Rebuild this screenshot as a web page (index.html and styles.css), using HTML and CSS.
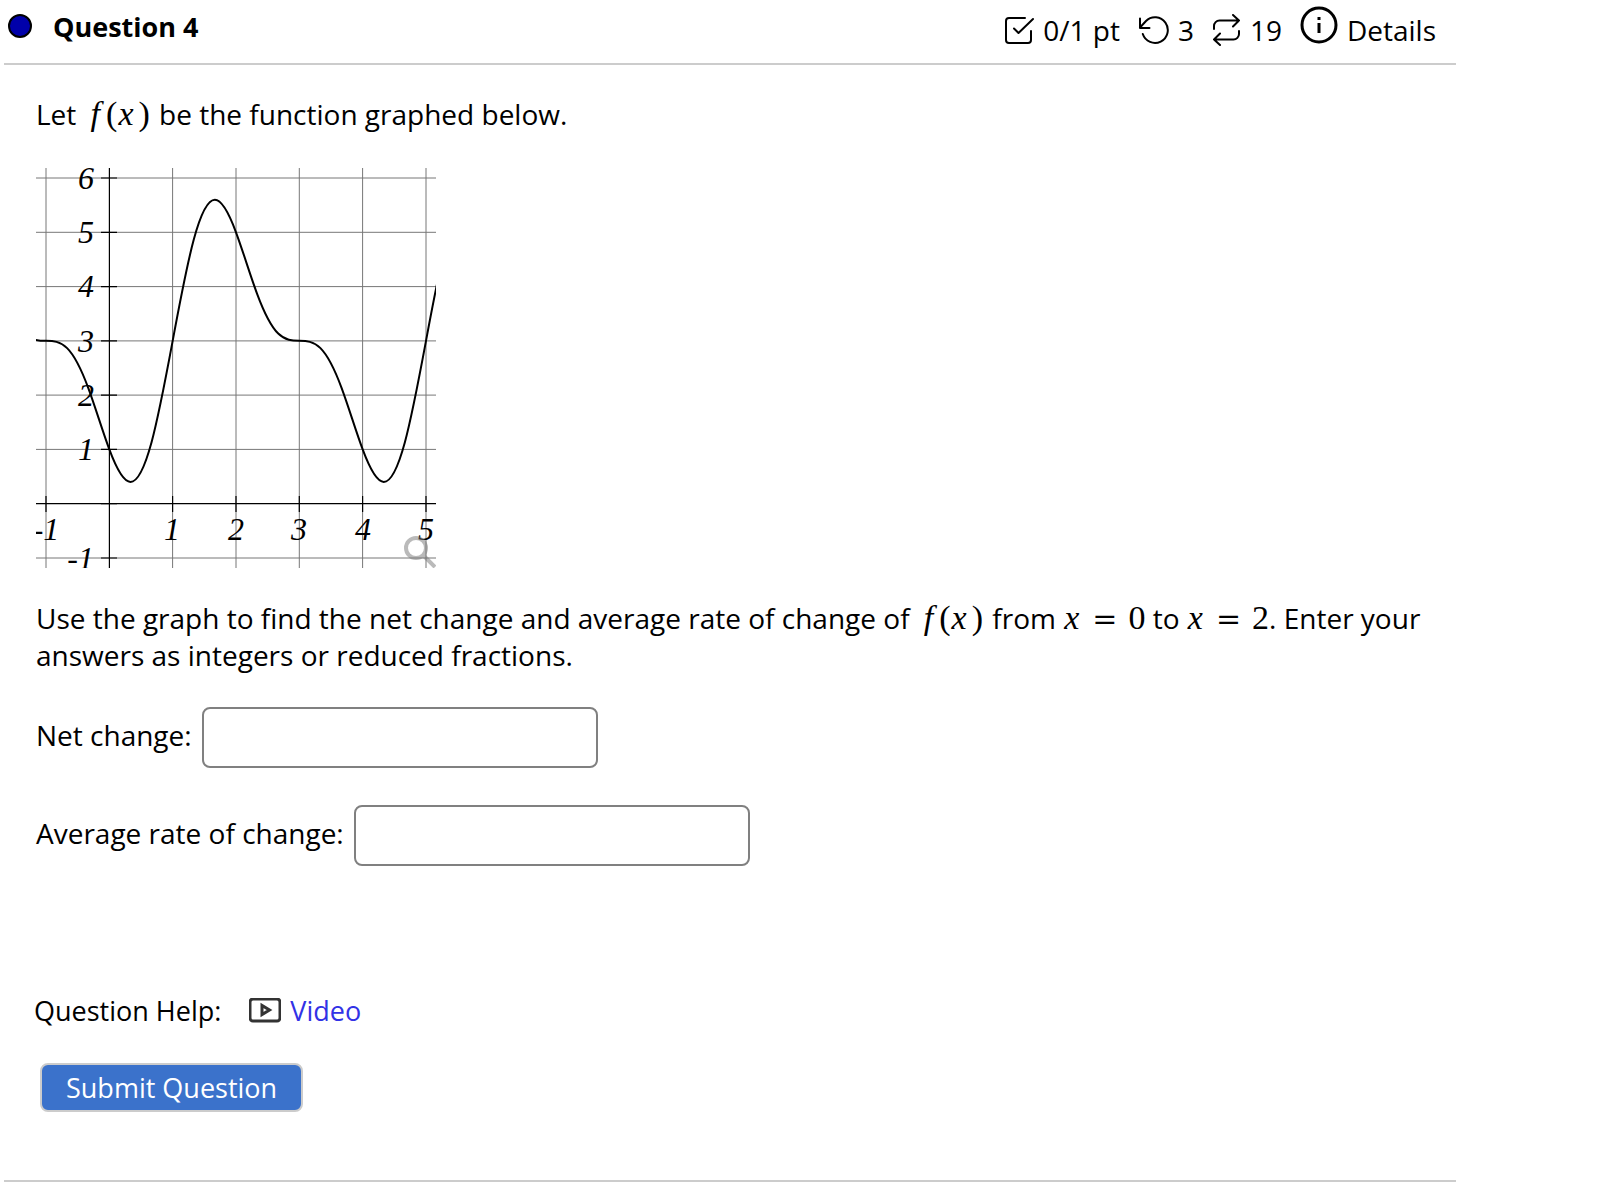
FILE: index.html
```
<!DOCTYPE html>
<html lang="en">
<head>
<meta charset="utf-8">
<meta name="viewport" content="width=device-width, initial-scale=1">
<title>Question 4</title>
<link rel="stylesheet" href="styles.css">
</head>
<body>
<main class="page">
  <section class="question">
    <header class="question-header">
      <div class="question-title">
        <span class="status-dot"></span>
        <h1>Question 4</h1>
      </div>
      <div class="question-meta">
        <span class="meta-item">
          <svg class="icon" width="29" height="28" viewBox="0 0 29 28" aria-hidden="true"><path d="M20 2H4a3 3 0 0 0-3 3v19a3 3 0 0 0 3 3h19a3 3 0 0 0 3-3v-9M9 12.500l4.500 4.500L28 3"/></svg>
          0/1 pt
        </span>
        <span class="meta-item">
          <svg class="icon" width="31" height="28" viewBox="0 0 31 28" aria-hidden="true"><path d="M4.800 18A12.800 12.800 0 1 0 8 5L2 11.500M2 2.500V12h9.500"/></svg>
          3
        </span>
        <span class="meta-item">
          <svg class="icon" width="29" height="32" viewBox="0 0 29 32" aria-hidden="true"><path d="M2 15v-3a5.500 5.500 0 0 1 5.500-5.500H27M21 1l6 5.500-6 6M27 17v3a5.500 5.500 0 0 1-5.500 5.500H2M8 31l-6-5.500 6-6"/></svg>
          19
        </span>
        <span class="meta-item">
          <svg class="icon icon-info" width="38" height="38" viewBox="0 0 38 38" aria-hidden="true"><circle cx="19" cy="19" r="17"/><path d="M19 17v10M19 11v3"/></svg>
          Details
        </span>
      </div>
    </header>

    <div class="question-body">
      <p>Let <span class="math"><i class="fn">f</i><span>(</span><i class="arg">x</i><span class="paren-close">)</span></span> be the function graphed below.</p>

      <svg class="graph" width="400" height="400" viewBox="0 0 400 400" role="img" aria-label="Graph of f">
        <g class="grid">
          <path d="M10 0V400M136.600 0V400M200 0V400M263.300 0V400M326.600 0V400M390 0V400"/>
          <path d="M0 10H400M0 64.300H400M0 118.600H400M0 172.900H400M0 227.100H400M0 281.400H400M0 390H400"/>
        </g>
        <g class="axes">
          <path d="M73.400 0V400M0 335.700H400"/>
          <path d="M10 328v16M136.600 328v16M200 328v16M263.300 328v16M326.600 328v16M390 328v16"/>
          <path d="M65 10h16M65 64.300h16M65 118.600h16M65 172.900h16M65 227.100h16M65 281.400h16M65 335.700h16M65 390h16"/>
        </g>
        <g class="labels labels-x">
          <text x="10" y="372">-1</text><text x="136" y="372">1</text><text x="200" y="372">2</text><text x="263" y="372">3</text><text x="327" y="372">4</text><text x="390" y="372">5</text>
        </g>
        <g class="labels labels-y">
          <text x="58" y="21">6</text><text x="58" y="75">5</text><text x="58" y="129">4</text><text x="58" y="184">3</text><text x="58" y="238">2</text><text x="58" y="292">1</text><text x="58" y="401">-1</text>
        </g>
        <!-- y = 3 - 2cos(pi x/2) - sin(pi x), in graph units -->
        <g transform="translate(73.333 335.714) scale(63.333 -54.286)">
          <path class="curve" d="M-1.3333 3.134C-1.2222 3.006-1.1111 3-1 3S-.7778 2.994-.6667 2.866-.4444 2.483-.3333 2.134-.1111 1.349 0 1 .2222 .402.3333 .402.5556 .657.6667 1.134.8889 2.302 1 3 1.2222 4.389 1.3333 4.866 1.5556 5.598 1.6667 5.598 1.8889 5.349 2 5 2.2222 4.215 2.3333 3.866 2.5556 3.262 2.6667 3.134 2.8889 3 3 3 3.2222 2.994 3.3333 2.866 3.5556 2.483 3.6667 2.134 3.8889 1.349 4 1 4.2222 .402 4.3333 .402 4.5556 .657 4.6667 1.134 4.8889 2.302 5 3 5.2222 4.389 5.3333 4.866"/>
        </g>
        <g class="magnifier"><circle cx="380" cy="380" r="10"/><path d="M388 388l11 11"/></g>
      </svg>

      <p>Use the graph to find the net change and average rate of change of <span class="math"><i class="fn">f</i><span>(</span><i class="arg">x</i><span class="paren-close">)</span></span> from <span class="math"><i class="var">x</i><span class="eq">=</span>0</span> to <span class="math"><i class="var">x</i><span class="eq">=</span>2</span>. Enter your answers as integers or reduced fractions.</p>

      <div class="answer">
        <label for="net-change">Net change:</label>
        <input id="net-change" type="text">
      </div>
      <div class="answer">
        <label for="average-rate">Average rate of change:</label>
        <input id="average-rate" type="text">
      </div>
    </div>

    <footer class="question-footer">
      <div class="help">
        <span>Question Help:</span>
        <a href="#video">
          <svg width="32" height="25" viewBox="0 0 32 25" aria-hidden="true"><rect x="1" y="1" width="30" height="22" rx="3"/><path d="M13 7.500v9l7.500-4.500z"/></svg>
          Video
        </a>
      </div>
      <button type="button">Submit Question</button>
    </footer>
  </section>
</main>
</body>
</html>
```
FILE: styles.css
```
* {
  box-sizing: border-box;
}

body {
  margin: 0;
  background: #fff;
  color: #000;
  font-family: "Open Sans", "Noto Sans", sans-serif;
  font-size: 28px;
  line-height: 37px;
  font-variant-ligatures: none;
}

.page {
  margin: 0 150px 0 4px;
}

.question {
  border-bottom: 2px solid #ccc;
}

.question-header {
  display: flex;
  justify-content: space-between;
  align-items: flex-start;
  padding: 6px 20px 9px 4px;
  border-bottom: 2px solid #ccc;
}

.question-title {
  display: flex;
  align-items: center;
  gap: 21px;
}

.question-title h1 {
  margin: 2px 0 0;
  font-size: 27px;
  font-weight: 700;
}

.status-dot {
  width: 24px;
  height: 24px;
  border: 2px solid #000;
  border-radius: 50%;
  background: #00a;
}

.question-meta {
  display: flex;
  align-items: center;
  gap: 18px;
}

.meta-item {
  display: flex;
  align-items: center;
  gap: 9px;
}

.icon {
  flex: none;
  fill: none;
  stroke: #000;
  stroke-width: 2;
  stroke-linecap: round;
  stroke-linejoin: round;
}

.icon-info {
  margin-bottom: 10px;
  stroke-width: 3;
  stroke-linecap: butt;
}

.question-body {
  padding: 31px 30px 0 32px;
}

.question-body p {
  margin: 0;
}

.math {
  font-family: "Liberation Serif", serif;
  font-size: 34px;
  line-height: 1;
  white-space: nowrap;
}

.fn {
  margin: 0 6px 0 7px;
}

.arg {
  margin: 0 5px 0 1px;
}

.paren-close {
  margin-right: 2px;
}

.var {
  margin-left: 1px;
}

.eq {
  margin: 0 11px 0 13px;
  font-family: "DejaVu Serif", serif;
  font-size: 30px;
}

.graph {
  display: block;
  margin: 35px 0 32px;
  overflow: hidden;
}

.grid {
  stroke: #777;
}

.axes {
  fill: none;
  stroke: #000;
  stroke-width: 1.2;
}

.labels {
  font-family: "Liberation Serif", serif;
  font-size: 32px;
  font-style: italic;
}

.labels-x {
  text-anchor: middle;
}

.labels-y {
  text-anchor: end;
}

.curve {
  fill: none;
  stroke: #000;
  stroke-width: 2px;
  vector-effect: non-scaling-stroke;
}

.magnifier {
  fill: none;
  stroke: #777;
  stroke-width: 4;
  opacity: 0.5;
}

.answer {
  display: flex;
  align-items: center;
  gap: 10px;
  margin-top: 37px;
}

p + .answer {
  margin-top: 33px;
}

.answer label {
  padding-bottom: 4px;
}

.answer input {
  width: 396px;
  height: 61px;
  padding: 0 12px;
  border: 2px solid #808080;
  border-radius: 8px;
  background: #fff;
  font: inherit;
}

.question-footer {
  padding: 126px 30px 68px;
  font-size: 27px;
}

.help {
  display: flex;
  gap: 28px;
}

.help a {
  display: flex;
  align-items: center;
  gap: 9px;
  color: #3232e6;
  text-decoration: none;
}

.help svg {
  fill: none;
  stroke: #333;
  stroke-width: 3;
}

button {
  display: block;
  height: 49px;
  margin: 34px 0 0 6px;
  padding: 0 24px;
  border: 2px solid #ccc;
  border-radius: 8px;
  background: #3b72cb;
  color: #fff;
  font: inherit;
}
```
